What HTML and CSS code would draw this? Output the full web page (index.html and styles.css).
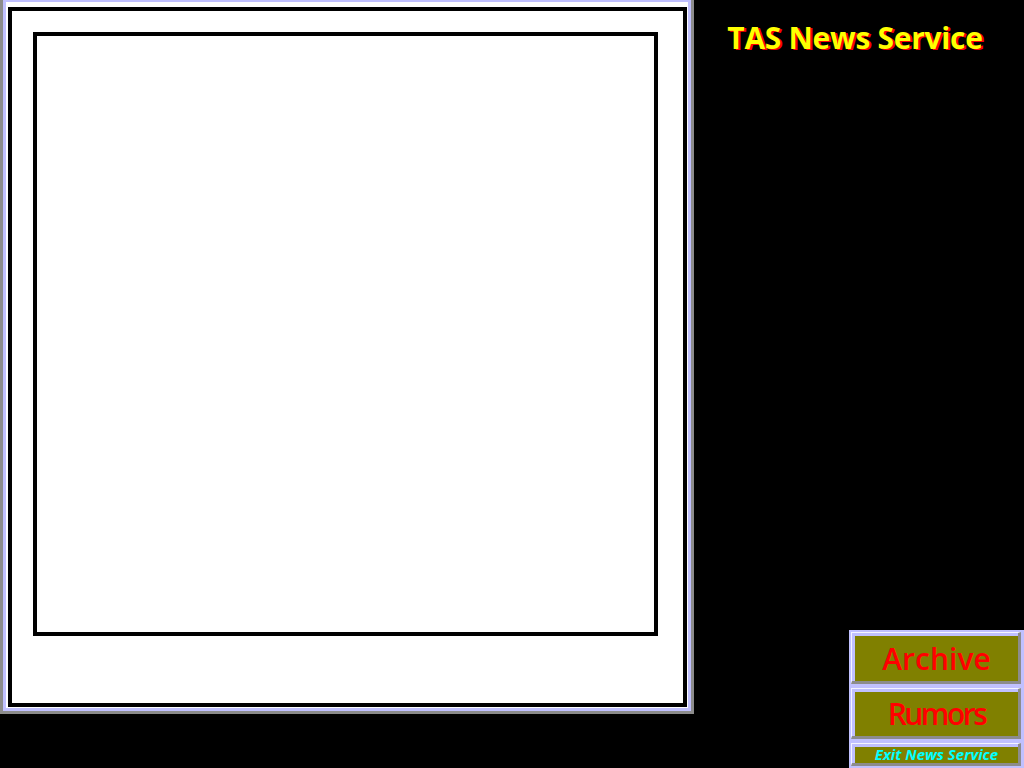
FILE: index.html
```html
<!DOCTYPE html>
<html>
<head>
<meta charset="utf-8">
<title>TAS News Service</title>
<link rel="stylesheet" href="styles.css">
</head>
<body>
<div class="page">
  <div class="viewer">
    <div class="viewer-ring">
      <div class="viewer-paper">
        <div class="frame"></div>
      </div>
    </div>
  </div>
  <div class="side">
    <h1 class="title">TAS News Service</h1>
    <div class="menu">
      <div class="btn btn-big">Archive</div>
      <div class="btn btn-big btn-narrow">Rumors</div>
      <div class="btn btn-small">Exit News Service</div>
    </div>
  </div>
</div>
</body>
</html>
```
FILE: styles.css
```css
html, body {
  margin: 0;
  padding: 0;
  background: #000;
  height: 100%;
  overflow: hidden;
}

.page {
  display: flex;
  width: 1024px;
  height: 768px;
}

.viewer {
  width: 694px;
  height: 714px;
  box-sizing: border-box;
  border-left: 3px solid #8c8c8c;
  border-right: 3px solid #8c8c8c;
  border-bottom: 3px solid #8c8c8c;
  flex: none;
}

.viewer-ring {
  height: 100%;
  box-sizing: border-box;
  border-top: 2px solid #c0c0ff;
  border-left: 3px solid #c0c0ff;
  border-right: 3px solid #c0c0ff;
  border-bottom: 3px solid #c0c0ff;
  background: #fff;
  padding: 5px 1px 1px 2px;
}

.viewer-paper {
  height: 100%;
  box-sizing: border-box;
  border: 4px solid #000;
  background: #fff;
  padding: 21px 25px 67px 21px;
}

.frame {
  height: 100%;
  box-sizing: border-box;
  border: 4px solid #000;
}

.side {
  flex: 1;
  display: flex;
  flex-direction: column;
  justify-content: space-between;
}

.title {
  margin: 20px 0 0 0;
  padding-right: 8px;
  text-align: center;
  font-family: "Open Sans", "DejaVu Sans", sans-serif;
  font-weight: 700;
  font-size: 30px;
  line-height: 36px;
  color: #ffff00;
  text-shadow: 2px 1px 0 #ff0000;
  letter-spacing: -0.3px;
}

.menu {
  align-self: flex-end;
  width: 175px;
  height: 138px;
  box-sizing: border-box;
  background: #c0c0ff;
  padding: 2px 3px 2px 2px;
  display: flex;
  flex-direction: column;
  gap: 4px;
}

.btn {
  background: #808000;
  border-top: 1px solid #f4f4ff;
  border-left: 1px solid #f4f4ff;
  border-right: 3px solid #8c8c8c;
  border-bottom: 3px solid #8c8c8c;
  box-shadow: inset 3px 3px 0 #c0c0ff;
  display: flex;
  align-items: center;
  justify-content: center;
  font-family: "Open Sans", "DejaVu Sans", sans-serif;
}

.btn-big {
  height: 48px;
  color: #ff0000;
  font-size: 30px;
  font-weight: 600;
  padding-left: 3px;
  padding-top: 3px;
}

.btn-narrow {
  letter-spacing: -2.5px;
}

.btn-small {
  color: #00ffff;
  font-size: 15px;
  font-weight: 700;
  font-style: italic;
  padding-left: 3px;
  padding-top: 0;
  box-sizing: border-box;
  height: 23px;
}
```
